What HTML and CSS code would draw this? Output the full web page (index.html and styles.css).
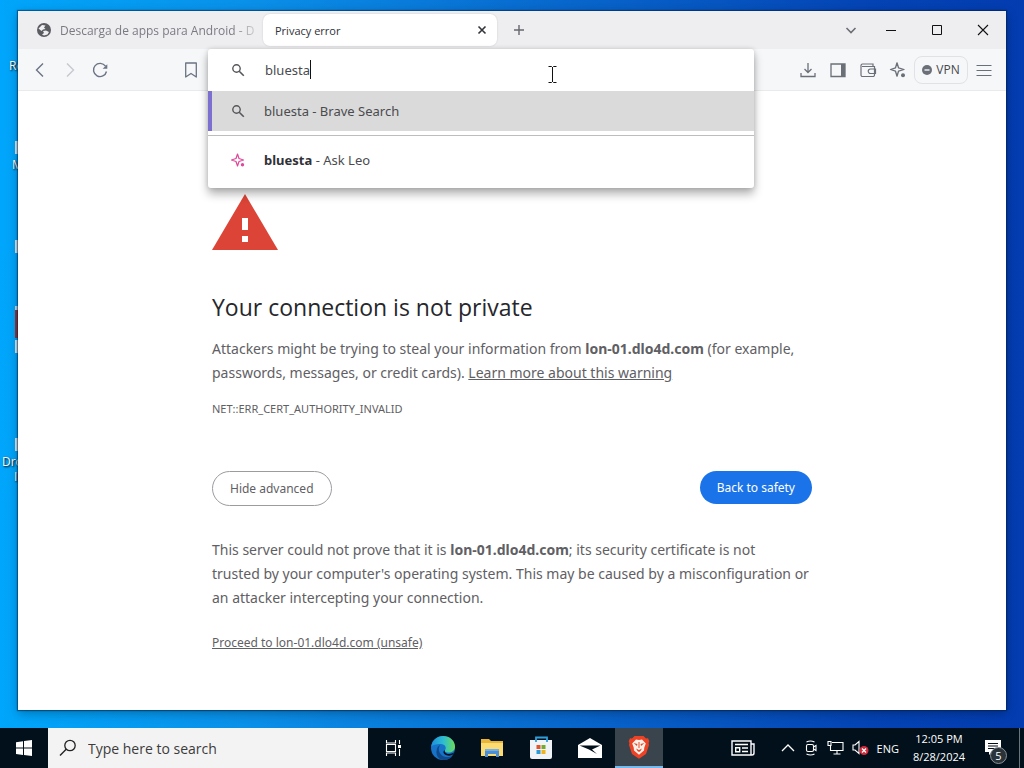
FILE: index.html
```html
<!DOCTYPE html>
<html lang="en">
<head>
    <meta charset="UTF-8">
    <meta name="viewport" content="width=device-width, initial-scale=1.0">
    <title>Privacy error</title>
    <link rel="stylesheet" href="styles.css">
</head>
<body>
    <div class="desktop">
        <!-- desktop shortcuts, mostly hidden behind the window -->
        <span class="shortcut" style="left: 9px; top: 58px">Recycle</span>
        <span class="shortcut" style="left: 12px; top: 157px">Microsoft</span>
        <span class="shortcut" style="left: 2px; top: 454px">Dropbox</span>
        <span class="shortcut" style="left: 14px; top: 469px">Installer</span>
        <i class="file" style="left: 15px; top: 141px"></i>
        <i class="file" style="left: 15px; top: 240px"></i>
        <i class="file red" style="left: 15px; top: 306px"></i>
        <i class="file" style="left: 15px; top: 340px"></i>
        <i class="file" style="left: 15px; top: 438px"></i>

        <div class="window">
            <header class="tabs">
                <a class="tab" href="#apps">
                    <svg width="16" height="16" viewBox="0 0 16 16"><circle cx="8" cy="8" r="7" fill="#5b5c62"/><path d="M2.500 6.500L6 3l3.500.5L8 5.500 9.500 7 7 7.500 5.500 9zM7 9l3-.500 3 1.500-1.500 2.500L8 13.500l-2-1 2-1.500z" fill="#efeff2"/></svg>
                    <span>Descarga de apps para Android - D</span>
                </a>
                <div class="tab active">
                    <span>Privacy error</span>
                    <button class="close" aria-label="Close tab"><svg width="10" height="10" viewBox="0 0 10 10"><path d="M1.500 1.500l7 7M8.500 1.500l-7 7" stroke="#33343a" stroke-width="1.600"/></svg></button>
                </div>
                <button class="plus" aria-label="New tab"><svg width="12" height="12" viewBox="0 0 12 12"><path d="M6 1v10M1 6h10" stroke="#66686e" stroke-width="1.400"/></svg></button>
                <div class="controls">
                    <button class="tabsearch" aria-label="Search tabs"><svg width="12" height="12" viewBox="0 0 12 12"><path d="M1.500 4L6 8.500 10.500 4" fill="none" stroke="#6c6e75" stroke-width="1.600"/></svg></button>
                    <button aria-label="Minimize"><svg width="12" height="12" viewBox="0 0 12 12"><path d="M1 6.500h10" stroke="#111"/></svg></button>
                    <button aria-label="Maximize"><svg width="12" height="12" viewBox="0 0 12 12"><path d="M1.500 1.500h9v9h-9z" fill="none" stroke="#111"/></svg></button>
                    <button aria-label="Close"><svg width="12" height="12" viewBox="0 0 12 12"><path d="M1 1l10 10M11 1L1 11" stroke="#111" stroke-width="1.100"/></svg></button>
                </div>
            </header>

            <div class="toolbar">
                <nav class="nav">
                    <button aria-label="Back"><svg width="18" height="18" viewBox="0 0 18 18"><path d="M12 2.500L5.500 9l6.500 6.500" fill="none" stroke="#6b7484" stroke-width="1.400"/></svg></button>
                    <button aria-label="Forward"><svg width="18" height="18" viewBox="0 0 18 18"><path d="M6 2.500L12.500 9 6 15.500" fill="none" stroke="#c6c9cf" stroke-width="1.400"/></svg></button>
                    <button aria-label="Reload"><svg width="18" height="18" viewBox="0 0 18 18"><path d="M15.500 10.500A6.600 6.600 0 1 1 14.500 5.200" fill="none" stroke="#6b7484" stroke-width="1.400"/><path d="M16.300 3.200v4.600h-4.600z" fill="#6b7484"/></svg></button>
                    <button class="bookmark" aria-label="Bookmark"><svg width="18" height="18" viewBox="0 0 18 18"><path d="M3.700 2h10.600v14L9 12.500 3.700 16z" fill="none" stroke="#6b7484" stroke-width="1.300" stroke-linejoin="round"/></svg></button>
                </nav>

                <div class="address">
                    <div class="omnibox">
                        <label class="field">
                            <svg width="14" height="14" viewBox="0 0 14 14"><circle cx="5.500" cy="5.500" r="3.700" fill="none" stroke="#55565a" stroke-width="1.400"/><path d="M8.200 8.200l4.600 4.600" stroke="#55565a" stroke-width="1.600"/></svg>
                            <input type="text" value="bluesta" aria-label="Address">
                            <i class="caret"></i>
                        </label>
                        <a class="row selected" href="#search">
                            <svg width="14" height="14" viewBox="0 0 14 14"><circle cx="5.500" cy="5.500" r="3.700" fill="none" stroke="#55565a" stroke-width="1.400"/><path d="M8.200 8.200l4.600 4.600" stroke="#55565a" stroke-width="1.600"/></svg>
                            <span>bluesta - Brave Search</span>
                        </a>
                        <a class="row leo" href="#leo">
                            <svg width="14" height="14" viewBox="0 0 14 14"><path d="M6.500 1l1.500 4.500L12.500 7 8 8.500 6.500 13 5 8.500.5 7 5 5.500z" fill="none" stroke="#e0489b" stroke-width="1.200" stroke-linejoin="round"/><circle cx="11.500" cy="11.800" r="1.700" fill="#e0489b"/></svg>
                            <span><b>bluesta</b> - Ask Leo</span>
                        </a>
                    </div>
                    <svg class="pointer" width="9" height="17" viewBox="0 0 9 17"><path d="M.5 .5h3l1 1 1-1h3M4.500 1v15M.5 16.500h3l1-1 1 1h3" fill="none" stroke="#111"/></svg>
                </div>

                <div class="tools">
                    <button aria-label="Downloads"><svg width="18" height="18" viewBox="0 0 18 18"><path d="M9 2v9M5.500 8L9 11.500 12.500 8M2 12v3.500h14V12" fill="none" stroke="#6b7078" stroke-width="1.300"/></svg></button>
                    <button aria-label="Sidebar"><svg width="18" height="18" viewBox="0 0 18 18"><path d="M2 3h14v12.500H2z" fill="none" stroke="#6b7078" stroke-width="1.300"/><path d="M12 3h4v12.500h-4z" fill="#6b7078"/></svg></button>
                    <button aria-label="Wallet"><svg width="18" height="18" viewBox="0 0 18 18"><path d="M14 5.500V3H3.500a1.600 1.600 0 0 0-1.500 1.500V14a1.500 1.500 0 0 0 1.500 1.500H14a1.500 1.500 0 0 0 1.500-1.500V5.500H3M16.500 8h-5a2 2 0 0 0 0 4.500h5z" fill="none" stroke="#6b7078" stroke-width="1.200"/></svg></button>
                    <button aria-label="Leo"><svg width="18" height="18" viewBox="0 0 18 18"><path d="M8 1.800l1.500 5 5.500 1.700-5.500 1.700L8 15.200l-1.500-5L1.500 8.500l5-1.700z" fill="none" stroke="#6b7078" stroke-width="1.300" stroke-linejoin="round"/><circle cx="14" cy="14.200" r="2" fill="#6b7078"/></svg></button>
                    <button class="vpn"><svg width="10" height="10" viewBox="0 0 10 10"><circle cx="5" cy="5" r="5" fill="#6b7078"/><path d="M2.500 5h5" stroke="#fff" stroke-width="1.300"/></svg>VPN</button>
                    <button aria-label="Menu"><svg width="18" height="18" viewBox="0 0 18 18"><path d="M1.500 4.500h15M1.500 9.500h15M1.500 14.500h15" stroke="#6b7078" stroke-width="1.200"/></svg></button>
                </div>
            </div>

            <main class="page">
                <div class="warning">
                    <svg width="66" height="56" viewBox="0 0 66 56"><path d="M33 0l33 56H0z" fill="#db4437"/><path d="M30 24h6v12h-6zM30 42h6v6h-6z" fill="#fff"/></svg>
                    <h1>Your connection is not private</h1>
                    <p>Attackers might be trying to steal your information from <b>lon-01.dlo4d.com</b> (for example, passwords, messages, or credit cards). <a href="#learn">Learn more about this warning</a></p>
                    <p class="code">NET::ERR_CERT_AUTHORITY_INVALID</p>
                    <div class="buttons">
                        <button class="advanced">Hide advanced</button>
                        <button class="safety">Back to safety</button>
                    </div>
                    <p>This server could not prove that it is <b>lon-01.dlo4d.com</b>; its security certificate is not<br>trusted by your computer's operating system. This may be caused by a misconfiguration or<br>an attacker intercepting your connection.</p>
                    <p class="proceed"><a href="#proceed">Proceed to lon-01.dlo4d.com (unsafe)</a></p>
                </div>
            </main>
        </div>
    </div>

    <footer class="taskbar">
        <button class="start" aria-label="Start"><svg width="16" height="16" viewBox="0 0 16 16"><path d="M0 2.200L7 1.200v6.400H0zM8 1l8-1v7.600H8zM0 8.600h7V15l-7-1zM8 8.600h8V16l-8-1z" fill="#fff"/></svg></button>
        <label class="search">
            <svg width="18" height="18" viewBox="0 0 18 18"><circle cx="11" cy="6.500" r="5.200" fill="none" stroke="#222" stroke-width="1.300"/><path d="M7.200 10.300L1 16.500" stroke="#222" stroke-width="1.400"/></svg>
            <input type="text" placeholder="Type here to search">
        </label>
        <div class="apps">
            <button aria-label="Task View"><svg width="18" height="18" viewBox="0 0 18 18"><path d="M1.500 1v3h9V1M1.500 17v-3h9v3M1.500 5.500h9v7h-9zM14.500 1v4M14.500 10v7" fill="none" stroke="#fff" stroke-width="1.100"/><path d="M13 6h3v3h-3z" fill="#fff"/></svg></button>
            <button aria-label="Edge"><svg width="26" height="26" viewBox="0 0 26 26">
                <defs>
                    <linearGradient id="edge-top" x1="0" x2="1"><stop offset="0" stop-color="#1d8fdb"/><stop offset=".5" stop-color="#2cbcd2"/><stop offset="1" stop-color="#6bdc5b"/></linearGradient>
                </defs>
                <circle cx="13" cy="13" r="12" fill="#1673c9"/>
                <path d="M1.200 12C2 5 7 1 13 1c7 0 12 5 12 10.500 0 4-3 6-6.500 6-3 0-4.500-1.500-3.500-2.500 2-2 0-6-4-6C6 9 2 10 1.200 12z" fill="url(#edge-top)"/>
                <path d="M10 10c-3 5 0 11 6 12 3 .4 5.500-.5 7.300-2.600C21.500 23 18 25 14 25 8 25 6 20 6.500 16c.3-3 1.500-5 3.500-6z" fill="#114a8b"/>
                <path d="M15 15c-1 1.500.5 4 4 4 2 0 3.700-.6 5-1.700l-.7 2c-2.500 2-6.800 1.700-9-.3-1.500-1.500-1-3.500.7-4z" fill="#02101b"/>
            </svg></button>
            <button aria-label="File Explorer"><svg width="24" height="22" viewBox="0 0 24 22"><path d="M1 2h8l2 2h12v15H1z" fill="#e9b437"/><path d="M1 6h22v13H1z" fill="#fbdb72"/><path d="M5 12h14v8h-3v-3H8v3H5z" fill="#4c8fd6"/><path d="M5 12h14v2H5z" fill="#75afe4"/></svg></button>
            <button aria-label="Store"><svg width="24" height="24" viewBox="0 0 24 24"><path d="M1 4h22v17a2 2 0 0 1-2 2H3a2 2 0 0 1-2-2z" fill="#f1f4f6"/><path d="M7 6V1.500h11V6" fill="none" stroke="#2f9fdc" stroke-width="1.800"/><path d="M7.500 9h4v4h-4z" fill="#e2542d"/><path d="M12.500 9h4v4h-4z" fill="#76a82b"/><path d="M7.500 14h4v4h-4z" fill="#2d9bd8"/><path d="M12.500 14h4v4h-4z" fill="#f0b321"/></svg></button>
            <button aria-label="Mail"><svg width="24" height="20" viewBox="0 0 24 20"><path d="M0 7L12 0l12 7v13H0z" fill="#fff"/><path d="M1.500 7.500h21L14 11.500l5 4.500-8-4.500z" fill="#02101b"/></svg></button>
            <button class="running" aria-label="Brave"><svg width="22" height="24" viewBox="0 0 22 24"><path d="M6.500 1h9L18 3.500l2-.3 1.300 3-.7 1.800.4 2-3 9-7 4.800-7-4.800-3-9 .4-2L.7 6.200l1.300-3 2 .3z" fill="#ec4326"/><path d="M11 5l3-.6 3.800 4-1.500 4-.3 3-5 4.300-5-4.300-.3-3-1.500-4L8 4.400z" fill="#fff1e9"/><path d="M5.500 8l4 1-.6 2zM16.500 8l-4 1 .6 2zM8 13.500l3 1.500 3-1.500-1.500 2.500L11 17l-1.500-1zM10.500 7h1v6h-1z" fill="#df482c"/></svg></button>
        </div>
        <div class="tray">
            <button class="news" aria-label="News"><svg width="24" height="16" viewBox="0 0 24 16"><path d="M1 1h19v14H1zM20 4h3v9q0 2-2 2h-1M4 4.500h13M11 8h6M11 11.500h6" fill="none" stroke="#fff" stroke-width="1.400"/><path d="M4.700 7.700h4v4h-4z" fill="none" stroke="#fff" stroke-width="1.400"/></svg></button>
            <button aria-label="Show hidden icons"><svg width="14" height="8" viewBox="0 0 14 8"><path d="M1 7l6-6 6 6" fill="none" stroke="#fff" stroke-width="1.300"/></svg></button>
            <svg width="16" height="16" viewBox="0 0 16 16"><rect x="3.500" y="4.500" width="7" height="7" rx="1.500" fill="none" stroke="#fff" stroke-width="1.100"/><path d="M10.500 7l2.500-1.500v5L10.500 9M3.500 2q4-2 8 0M3.500 14q4 2 8 0" fill="none" stroke="#fff" stroke-width="1.100"/></svg>
            <svg width="17" height="14" viewBox="0 0 17 14"><path d="M5 1.500h11v8H3.500V5M1 .5h3v4H1zM10 9.500v3M6.500 13h7" fill="none" stroke="#fff" stroke-width="1.100"/></svg>
            <svg width="17" height="16" viewBox="0 0 17 16"><path d="M1 5h2l4-3.500v12L3 10H1z" fill="none" stroke="#fff" stroke-width="1.100"/><circle cx="12" cy="10.500" r="4.500" fill="#d02c3c"/><path d="M10 8.500l4 4M14 8.500l-4 4" stroke="#fff" stroke-width="1.300"/></svg>
            <span class="lang">ENG</span>
            <div class="clock"><span>12:05 PM</span><span>8/28/2024</span></div>
            <button class="alerts" aria-label="Notifications">
                <svg width="18" height="18" viewBox="0 0 18 18"><path d="M1 1h16v12H8l-3 3v-3H1z" fill="#fff"/><path d="M4 4.500h10M4 7h10M4 9.500h7" stroke="#02101b"/></svg>
                <span class="badge">5</span>
            </button>
        </div>
    </footer>
</body>
</html>
```

FILE: styles.css
```css
* {
    box-sizing: border-box;
}

body {
    margin: 0;
    min-height: 100vh;
    display: flex;
    flex-direction: column;
    font-family: "Open Sans", "Noto Sans", sans-serif;
    font-size: 13px;
    color: #5f6064;
    overflow: hidden;
}

button {
    display: flex;
    align-items: center;
    justify-content: center;
    padding: 0;
    border: 0;
    background: none;
    font: inherit;
    color: inherit;
}

input {
    border: 0;
    padding: 0;
    background: none;
    font: inherit;
    color: inherit;
    outline: none;
}

svg {
    display: block;
    flex-shrink: 0;
}

a {
    color: inherit;
}

.desktop {
    position: relative;
    flex: 1;
    display: flex;
    padding: 11px 18px 18px;
    background: linear-gradient(90deg, #00a6fb 0%, #0a8fe8 25%, #0867cc 55%, #0443b4 85%, #033cb0 100%);
}

/* shortcuts behind the window */
.shortcut {
    position: absolute;
    font-size: 12px;
    line-height: 16px;
    color: #fff;
    text-shadow: 1px 1px 2px #000;
}

.file {
    position: absolute;
    width: 16px;
    height: 13px;
    background: #d5e6f2;
}

.file.red {
    height: 32px;
    border-top: 4px solid #c8d8e8;
    background: #96323c;
}

.window {
    position: relative;
    flex: 1;
    min-width: 0;
    display: flex;
    flex-direction: column;
    background: #fff;
    box-shadow: 0 0 1px 1px rgba(0, 30, 70, 0.5), 0 3px 10px rgba(0, 0, 0, 0.3);
}

/* tabs */
.tabs {
    display: flex;
    align-items: center;
    height: 38px;
    background: #eeeef1;
}

.tab {
    display: flex;
    align-items: center;
    gap: 8px;
    width: 227px;
    margin-left: 18px;
    font-size: 12px;
    color: #7a7b81;
    text-decoration: none;
    white-space: nowrap;
}

.tab span {
    flex: 1;
    overflow: hidden;
}

.tab:first-child span {
    -webkit-mask-image: linear-gradient(90deg, #000 85%, transparent);
    mask-image: linear-gradient(90deg, #000 85%, transparent);
}

.tab.active {
    width: 234px;
    height: 32px;
    margin-left: 0;
    padding: 0 10px 0 12px;
    border-radius: 7px;
    background: #fff;
    font-size: 11px;
    color: #303136;
    box-shadow: 0 0 2px rgba(0, 0, 0, 0.15);
}

.plus {
    width: 20px;
    height: 20px;
    margin-left: 12px;
}

.controls {
    display: flex;
    gap: 22px;
    margin-left: auto;
    padding-right: 11px;
}

.controls button {
    width: 24px;
    height: 24px;
}

.controls .tabsearch {
    margin-right: -6px;
}

/* toolbar */
.toolbar {
    display: flex;
    align-items: center;
    height: 42px;
    padding: 0 13px;
    background: #f6f7f9;
    border-bottom: 1px solid #e9eaec;
}

.nav {
    display: flex;
    gap: 12px;
    width: 177px;
}

.nav .bookmark {
    margin: 0 8px 0 auto;
}

.address {
    position: relative;
    flex: 1;
    align-self: stretch;
}

.omnibox {
    position: absolute;
    top: 0;
    left: 0;
    right: 0;
    background: #fff;
    border-radius: 3px;
    box-shadow: 0 6px 10px rgba(0, 0, 0, 0.3), 0 0 5px rgba(0, 0, 0, 0.15);
    font-family: "Noto Sans", sans-serif;
    font-size: 13px;
    color: #4a4b4f;
}

.field {
    position: relative;
    display: flex;
    align-items: center;
    gap: 20px;
    height: 42px;
    padding: 0 23px;
}

.field input {
    flex: 1;
    caret-color: transparent;
}

.caret {
    position: absolute;
    left: 102px;
    top: 11px;
    width: 1px;
    height: 19px;
    background: #111;
}

.row {
    display: flex;
    align-items: center;
    gap: 19px;
    height: 40px;
    padding: 0 23px;
    text-decoration: none;
}

.row.selected {
    padding-left: 19px;
    border-left: 4px solid #7b70cf;
    background: #dadada;
}

.row.leo {
    height: 53px;
    margin-top: 4px;
    padding-bottom: 4px;
    border-top: 1px solid #bdbdbd;
}

.row b {
    color: #303136;
}

.pointer {
    position: absolute;
    left: 340px;
    top: 17px;
}

.tools {
    display: flex;
    align-items: center;
    gap: 12px;
    margin-left: 45px;
}

.tools .vpn {
    gap: 4px;
    width: 54px;
    height: 28px;
    margin: 0 -5px;
    border: 1px solid #e1e2e5;
    border-radius: 8px;
    font-size: 12px;
    color: #45474d;
}

/* error page */
.page {
    flex: 1;
    padding: 103px 20px 40px;
}

.warning {
    max-width: 600px;
    margin: 0 auto;
    font-family: "Noto Sans", sans-serif;
    font-size: 14px;
    line-height: 24px;
}

.warning h1 {
    margin: 41px 0 14px;
    font-family: "Open Sans", sans-serif;
    font-size: 23px;
    line-height: 32px;
    font-weight: normal;
    color: #26272c;
}

.warning p {
    margin: 0;
}

.warning .code {
    margin-top: 12px;
    font-size: 11px;
}

.buttons {
    display: flex;
    justify-content: space-between;
    align-items: flex-start;
    margin: 50px 0 32px;
}

.buttons button {
    height: 33px;
    padding: 0 17px;
    border-radius: 18px;
    font-size: 12px;
}

.buttons .advanced {
    height: 35px;
    border: 1px solid #9b9ca0;
}

.buttons .safety {
    background: #1a73e8;
    color: #fff;
}

.warning .proceed {
    margin-top: 21px;
    font-size: 12px;
}

/* taskbar */
.taskbar {
    display: flex;
    height: 40px;
    background: #02101b;
    color: #fff;
}

.start {
    width: 48px;
}

.search {
    display: flex;
    align-items: center;
    gap: 11px;
    width: 320px;
    padding: 0 11px;
    background: #f3f3f3;
    color: #222;
}

.search input {
    flex: 1;
    font-size: 14px;
}

.search input::placeholder {
    color: #3c3c3c;
}

.apps {
    display: flex;
    gap: 1px;
    padding-left: 2px;
}

.apps button {
    width: 48px;
}

.apps .running {
    border-bottom: 2px solid #76b9ed;
    background: #3a444c;
}

.tray {
    display: flex;
    align-items: center;
    gap: 8px;
    margin-left: auto;
    margin-right: 4px;
    padding-right: 12px;
    border-right: 1px solid #6a747c;
    font-size: 12px;
}

.news {
    margin-right: 18px;
}

.clock {
    display: flex;
    flex-direction: column;
    align-items: center;
    width: 64px;
    line-height: 18px;
    font-size: 11px;
}

.lang {
    font-size: 11px;
}

.alerts {
    position: relative;
    width: 28px;
    height: 28px;
}

.badge {
    position: absolute;
    right: 0;
    bottom: -2px;
    width: 17px;
    height: 17px;
    border: 1px solid #8a9096;
    border-radius: 50%;
    background: #2b333a;
    font-size: 11px;
    line-height: 15px;
    text-align: center;
}
```
